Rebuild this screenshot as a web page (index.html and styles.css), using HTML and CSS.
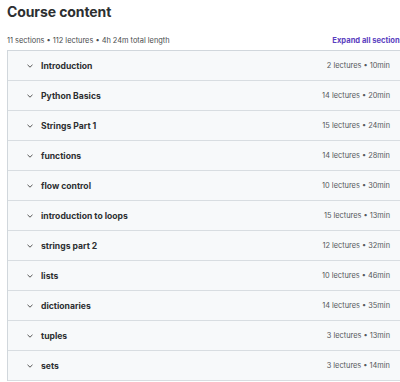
FILE: index.html
```html
<!DOCTYPE html>
<html>
<head>
  <title>Course content</title>
  <link rel="stylesheet" href="styles.css">
</head>
<body>
  <div class="curriculum">
    <h2 class="title">Course content</h2>
    <div class="summary">
      <span>11 sections • 112 lectures • 4h 24m total length</span>
      <button class="expand">Expand all sections</button>
    </div>
    <div class="sections">
      <div class="section"><span class="chev"><svg width="6" height="4" viewBox="0 0 6 4"><path d="M0.5 0.8l2.5 2.4 2.5-2.4" fill="none" stroke="#555" stroke-width="1"/></svg></span><span class="name">Introduction</span><span class="meta">2 lectures • 10min</span></div>
      <div class="section"><span class="chev"><svg width="6" height="4" viewBox="0 0 6 4"><path d="M0.5 0.8l2.5 2.4 2.5-2.4" fill="none" stroke="#555" stroke-width="1"/></svg></span><span class="name">Python Basics</span><span class="meta">14 lectures • 20min</span></div>
      <div class="section"><span class="chev"><svg width="6" height="4" viewBox="0 0 6 4"><path d="M0.5 0.8l2.5 2.4 2.5-2.4" fill="none" stroke="#555" stroke-width="1"/></svg></span><span class="name">Strings Part 1</span><span class="meta">15 lectures • 24min</span></div>
      <div class="section"><span class="chev"><svg width="6" height="4" viewBox="0 0 6 4"><path d="M0.5 0.8l2.5 2.4 2.5-2.4" fill="none" stroke="#555" stroke-width="1"/></svg></span><span class="name">functions</span><span class="meta">14 lectures • 28min</span></div>
      <div class="section"><span class="chev"><svg width="6" height="4" viewBox="0 0 6 4"><path d="M0.5 0.8l2.5 2.4 2.5-2.4" fill="none" stroke="#555" stroke-width="1"/></svg></span><span class="name">flow control</span><span class="meta">10 lectures • 30min</span></div>
      <div class="section"><span class="chev"><svg width="6" height="4" viewBox="0 0 6 4"><path d="M0.5 0.8l2.5 2.4 2.5-2.4" fill="none" stroke="#555" stroke-width="1"/></svg></span><span class="name">introduction to loops</span><span class="meta">15 lectures • 13min</span></div>
      <div class="section"><span class="chev"><svg width="6" height="4" viewBox="0 0 6 4"><path d="M0.5 0.8l2.5 2.4 2.5-2.4" fill="none" stroke="#555" stroke-width="1"/></svg></span><span class="name">strings part 2</span><span class="meta">12 lectures • 32min</span></div>
      <div class="section"><span class="chev"><svg width="6" height="4" viewBox="0 0 6 4"><path d="M0.5 0.8l2.5 2.4 2.5-2.4" fill="none" stroke="#555" stroke-width="1"/></svg></span><span class="name">lists</span><span class="meta">10 lectures • 46min</span></div>
      <div class="section"><span class="chev"><svg width="6" height="4" viewBox="0 0 6 4"><path d="M0.5 0.8l2.5 2.4 2.5-2.4" fill="none" stroke="#555" stroke-width="1"/></svg></span><span class="name">dictionaries</span><span class="meta">14 lectures • 35min</span></div>
      <div class="section"><span class="chev"><svg width="6" height="4" viewBox="0 0 6 4"><path d="M0.5 0.8l2.5 2.4 2.5-2.4" fill="none" stroke="#555" stroke-width="1"/></svg></span><span class="name">tuples</span><span class="meta">3 lectures • 13min</span></div>
      <div class="section"><span class="chev"><svg width="6" height="4" viewBox="0 0 6 4"><path d="M0.5 0.8l2.5 2.4 2.5-2.4" fill="none" stroke="#555" stroke-width="1"/></svg></span><span class="name">sets</span><span class="meta">3 lectures • 14min</span></div>
    </div>
  </div>
</body>
</html>
```

FILE: styles.css
```css
body {
  margin: 0;
  background-color: #fff;
  font-family: Inter, "Noto Sans", sans-serif;
  color: #2d2f31;
  overflow: hidden;
}

.curriculum {
  width: 397px;
  padding: 3px 0 0 7px;
}

.title {
  margin: 0;
  font-size: 14px;
  font-weight: 700;
  letter-spacing: -0.1px;
  line-height: 18px;
}

.summary {
  display: flex;
  justify-content: space-between;
  align-items: center;
  margin-top: 12px;
  height: 14px;
  font-size: 7.4px;
  color: #4a4c4e;
}

.expand {
  padding: 0;
  border: none;
  background: none;
  font-family: inherit;
  font-size: 7.6px;
  font-weight: 700;
  color: #5a3ec0;
  white-space: nowrap;
}

.sections {
  margin-top: 3px;
  border: 1px solid #d1d7dc;
  border-bottom: none;
}

.section {
  display: flex;
  align-items: center;
  height: 29px;
  padding: 0 13px 0 19px;
  background-color: #f7f9fa;
  border-bottom: 1px solid #d8dde1;
}

.chev {
  display: flex;
  width: 14px;
}

.name {
  flex: 1;
  font-size: 8.6px;
  font-weight: 700;
}

.meta {
  font-size: 7.4px;
  color: #55585b;
}
```
